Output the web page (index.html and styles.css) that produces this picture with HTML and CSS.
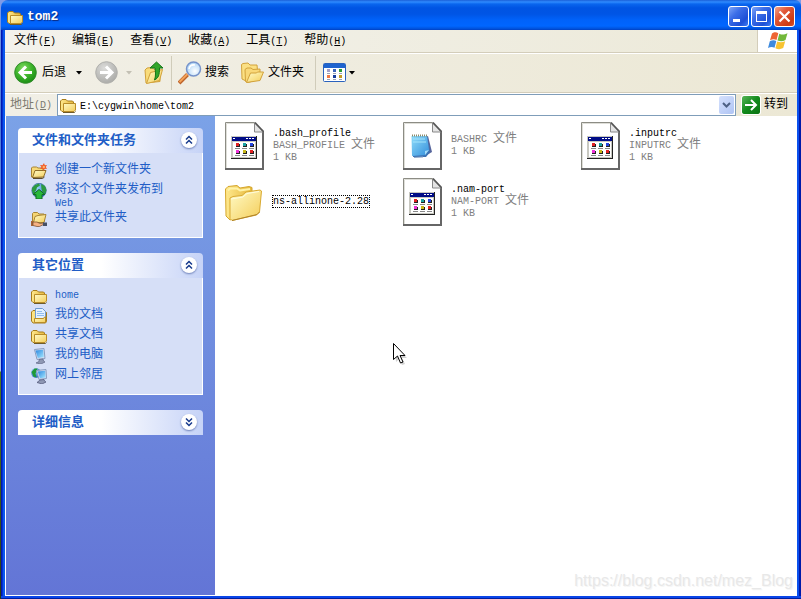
FILE: index.html
```html
<!DOCTYPE html>
<html lang="zh-CN">
<head>
<meta charset="utf-8">
<meta name="viewport" content="width=device-width, initial-scale=1">
<title>tom2</title>
<link rel="stylesheet" href="styles.css">
</head>
<body>
<svg class="defs" aria-hidden="true">
  <defs>
    <linearGradient id="gFolder" x1="0" y1="0" x2="1" y2="1"><stop offset="0" stop-color="#fffbc8"/><stop offset="1" stop-color="#f4cd58"/></linearGradient>
    <linearGradient id="gBack" x1="0" y1="0" x2="1" y2="0"><stop offset="0" stop-color="#ffe98e"/><stop offset="1" stop-color="#e6b83c"/></linearGradient>
    <radialGradient id="gGreen" cx=".4" cy=".3" r=".75"><stop offset="0" stop-color="#7ed860"/><stop offset=".5" stop-color="#3fb52c"/><stop offset="1" stop-color="#178a12"/></radialGradient>
    <radialGradient id="gGrey" cx=".4" cy=".3" r=".75"><stop offset="0" stop-color="#dcdcda"/><stop offset="1" stop-color="#a9a9a6"/></radialGradient>
    <radialGradient id="gLens" cx=".6" cy=".65" r=".7"><stop offset="0" stop-color="#ffffff"/><stop offset="1" stop-color="#a5d0f6"/></radialGradient>
    <linearGradient id="gScreen" x1="0" y1="0" x2="1" y2="1"><stop offset="0" stop-color="#2a86e0"/><stop offset="1" stop-color="#a6e8ff"/></linearGradient>
    <linearGradient id="gPad" x1="0" y1="0" x2="1" y2="1"><stop offset="0" stop-color="#8fdcfa"/><stop offset="1" stop-color="#3590dc"/></linearGradient>
    <linearGradient id="gGo" x1="0" y1="0" x2="1" y2="1"><stop offset="0" stop-color="#58b558"/><stop offset=".5" stop-color="#128a1c"/><stop offset="1" stop-color="#0c7414"/></linearGradient>
    <radialGradient id="gGlobe" cx=".35" cy=".3" r=".8"><stop offset="0" stop-color="#9fd8ff"/><stop offset="1" stop-color="#1559b8"/></radialGradient>
  </defs>
  <symbol id="folder16" viewBox="0 0 16 16">
    <path d="M.5 13V4L2 2.500h4L7.500 4h5l1 1v8.500l-1 1H2z" fill="url(#gBack)" stroke="#a67d1c"/>
    <path d="M3.500 14.500v-8h12V13L14 14.500z" fill="url(#gFolder)" stroke="#b98d28"/>
    <path d="M3 15.500h11.500l1-1" fill="none" stroke="#6d5a2a"/>
  </symbol>
  <symbol id="newfolder" viewBox="0 0 16 16">
    <path d="M.5 14V5l1-1h4l1.500 1H12v9z" fill="#f7d978" stroke="#a88434"/>
    <path d="M1.500 14.500L4 7.500h11l-2.500 6.500z" fill="url(#gFolder)" stroke="#8f6d26"/>
    <path d="M2 15.500h9.500l2-1.500" fill="none" stroke="#594a2c"/>
    <path d="M13 0l.8 2.300L16 2l-1.200 2L16 6l-2.200-.3L12.500 8l-.8-2.300L9 6l1.500-2L9 2l2.500.2z" fill="#f15a24"/><circle cx="12.800" cy="4" r="1.200" fill="#ffb26a"/>
  </symbol>
  <symbol id="publish" viewBox="0 0 16 16">
    <circle cx="8" cy="7.500" r="7.200" fill="url(#gGlobe)" stroke="#21568c" stroke-width=".6"/>
    <path d="M1 5l3-3 4-1.500 1 2-3 2-1 3-2 2-2-1zM10 1l4 2 1.500 4-1 4-3-2-1-3zM1 9l3 0 2 3-1 2z" fill="#2c9a40"/>
    <path d="M8 6.500l6 5h-3V16H5v-4.500H2z" fill="#28b83a" stroke="#116c22"/>
  </symbol>
  <symbol id="share" viewBox="0 0 16 16">
    <path d="M1.500 11V2.500l1-1h4L8 3h5v8z" fill="#f5d573" stroke="#a88434"/>
    <path d="M2.500 11.500L4 5.500l3-1 8-1-2 8z" fill="url(#gFolder)" stroke="#a88434"/>
    <path d="M0 10h2v5H0z" fill="#a86438"/><path d="M2 11l4 0 3 1.500 4-.5.5 1-5 2.500H6l-4-1z" fill="#f6b182" stroke="#704628" stroke-width=".7"/>
    <path d="M12 11.500h4V15h-4z" fill="#465066"/>
  </symbol>
  <symbol id="docs" viewBox="0 0 16 16">
    <path d="M.5 13V4L2 2.500h3l1 1h8.500l1 1v9l-1 1.500H2z" fill="url(#gBack)" stroke="#a67d1c"/>
    <path d="M4.500 11V.5h7l3 3V11z" fill="#e4f1ff" stroke="#6e9ad0"/><path d="M6 3.500h5M6 5.500h7M6 7.500h7" stroke="#8fbcf0"/>
    <path d="M3.500 14.500V10.500h9l1-1.500h1v5.500z" fill="url(#gFolder)" stroke="#b98d28"/>
  </symbol>
  <symbol id="computer" viewBox="0 0 16 16">
    <path d="M3.500 1.500L13 .5l1 10-8 1z" fill="#cfdcf3" stroke="#8a9dbf"/>
    <path d="M4.500 2.500L12 1.800l.8 7.200-6 1z" fill="url(#gScreen)"/>
    <path d="M8 11.500l4-.5.5 2 1.500 1-4 2-5-1 3-1.500z" fill="#8f98b4" stroke="#5d6484" stroke-width=".7"/>
  </symbol>
  <symbol id="network" viewBox="0 0 16 16">
    <circle cx="5" cy="5" r="4.800" fill="url(#gGlobe)"/><path d="M.5 4l3-3.500 3 0-1 3-1 2 1 4-3-1z" fill="#1f9a38"/>
    <path d="M5.500 2.500l9.500-1 .5 9-7.500 1z" fill="#cfdcf3" stroke="#8a9dbf"/><path d="M6.800 3.500l7.400-.8.300 6.800-5.500.8z" fill="url(#gScreen)"/>
    <path d="M9 12l4-.5.5 1.500 1.500 1-4 2-5-1.500z" fill="#8f98b4" stroke="#4c5274" stroke-width=".7"/>
  </symbol>
  <symbol id="caret" viewBox="0 0 6 4"><path d="M0 0h6L3 3.500z" fill="currentColor"/></symbol>
  <symbol id="chevrons" viewBox="0 0 16 16"><path d="M5 7.500l3-3 3 3M5 11.500l3-3 3 3" fill="none" stroke="#173a8c" stroke-width="1.500"/></symbol>
  <symbol id="document" viewBox="0 0 40 48">
    <path d="M.5.500H29.500L38.500 9.500v38H.5z" fill="#fff" stroke="#8c8c84"/>
    <path d="M1.500 46V1.500H29" fill="none" stroke="#deded8"/>
    <path d="M38 9v38" stroke="#666" stroke-width="2"/><path d="M0 47h39" stroke="#666" stroke-width="2"/>
    <path d="M29.500 1v9H38z" fill="#e4e4e4" stroke="#888"/><path d="M30 .5l8.500 9" stroke="#555" stroke-width="1.500"/>
  </symbol>
  <symbol id="appfile" viewBox="0 0 40 48">
    <use href="#document"/>
    <path d="M6 14h26v23H6z" fill="#222"/><path d="M6 14h25v22H6z" fill="#c8c8c0"/><path d="M8 20h22v15H8z" fill="#fff"/>
    <path d="M7 15h24v4H7z" fill="#000c86"/><path d="M8 16h2v1H8zM21 16h2v1h-2zM24 16h2v1h-2zM27 16h2v1h-2z" fill="#fff"/>
    <path d="M11 22h4v3h-4zM18 22h4v3h-4zM25 22h4v3h-4zM11 29h4v3h-4zM18 29h4v3h-4zM25 29h4v3h-4z" fill="#222"/>
    <path d="M11 21h3v3h-3zM25 28h3v3h-3z" fill="#e22222"/><path d="M18 21h3v3h-3z" fill="#18a0a0"/><path d="M25 21h3v3h-3z" fill="#2445e0"/><path d="M11 28h3v3h-3z" fill="#ee30d8"/><path d="M18 28h3v3h-3z" fill="#c7b818"/>
    <path d="M10 26.500h5M17 26.500h5M24 26.500h5M10 33.500h5M17 33.500h5M24 33.500h5" stroke="#888"/>
  </symbol>
  <symbol id="notefile" viewBox="0 0 40 48">
    <use href="#document"/>
    <path d="M22 15l3-1 4 16-5 3z" fill="#56659c"/>
    <path d="M9 14h15l3 16-4 5H10z" fill="#3d74b4"/>
    <path d="M8.500 14h15.500l2 14-4 5-13 1z" fill="url(#gPad)"/><path d="M9 13.500h15" stroke="#8a8a6a" stroke-width="2" stroke-dasharray="1 1"/>
    <path d="M10 17h12M10 20h13" stroke="#a4e4fb"/><path d="M22 33v-4l4-1z" fill="#a4dcf8"/>
    <path d="M11 35.500l9-.5" stroke="#8aa4c8"/>
  </symbol>
  <symbol id="bigfolder" viewBox="0 0 40 48">
    <path d="M.5 11L3 8.500l9-1L15 10l9-1.500 3 1v24L5 42l-4-4z" fill="url(#gBack)" stroke="#d5a62c"/>
    <path d="M3 12.500l2-2h7l3 2 10-1.500" fill="none" stroke="#fff3a8" stroke-width="2"/>
    <path d="M5 20l3-1.500 9-1 4-3.500 14-2 1.500 1-2 21-3 3L7 42.500l-2-2z" fill="url(#gFolder)" stroke="#d9aa32"/>
    <path d="M6 21l12-2 4-3.500 12-2" fill="none" stroke="#fffde0"/><path d="M7 42.500l25-6 2.500-2.500" fill="none" stroke="#af8229"/>
  </symbol>
</svg>

<div class="window">
  <header class="titlebar">
    <svg class="i16"><use href="#folder16"/></svg>
    <h1>tom2</h1>
    <button class="winbtn" type="button" aria-label="最小化"><svg viewBox="0 0 19 19"><path d="M4 12h7v3H4z" fill="#fff"/></svg></button>
    <button class="winbtn" type="button" aria-label="最大化"><svg viewBox="0 0 19 19"><path d="M4 4h11v11H4zM5 7v7h9V7z" fill="#fff" fill-rule="evenodd"/></svg></button>
    <button class="winbtn close" type="button" aria-label="关闭"><svg viewBox="0 0 19 19"><path d="M4.500 4.500l10 10M14.500 4.500l-10 10" stroke="#fff" stroke-width="2.200"/></svg></button>
  </header>

  <div class="frame">
    <nav class="menubar">
      <button type="button">文件<span class="en">(<u>F</u>)</span></button>
      <button type="button">编辑<span class="en">(<u>E</u>)</span></button>
      <button type="button">查看<span class="en">(<u>V</u>)</span></button>
      <button type="button">收藏<span class="en">(<u>A</u>)</span></button>
      <button type="button">工具<span class="en">(<u>T</u>)</span></button>
      <button type="button">帮助<span class="en">(<u>H</u>)</span></button>
      <div class="flag">
        <svg viewBox="0 0 20 18"><path d="M4 1.500C6.500-.3 8.500.2 10.300 1.200L8.500 8C6.500 7 4.500 7 2 8.300z" fill="#ee6433"/><path d="M11.300 1.700c2.700 1.300 5 1 8.200-.4L17.500 8c-3 1.500-5 1.500-8 .4z" fill="#72b83a"/><path d="M1.800 9.300C4.300 8 6.300 8 8.300 9L6.500 15.800C4.500 14.800 2.500 14.800 0 16z" fill="#3e8ade"/><path d="M9.200 9.500c2.800 1.200 5 1 8-.3l-2 6.800c-3 1.500-5 1.500-7.800.2z" fill="#f8c331"/></svg>
      </div>
    </nav>

    <div class="toolbar">
      <button class="tool back" type="button">
        <svg class="i24" viewBox="0 0 24 24"><circle cx="11.500" cy="11.500" r="10.800" fill="url(#gGreen)" stroke="#328c2b"/><path d="M12 5.500l-6 6 6 6M6.500 11.500H18" fill="none" stroke="#fff" stroke-width="3"/></svg>
        <span>后退</span><svg class="caret"><use href="#caret"/></svg>
      </button>
      <button class="tool forward" type="button" aria-label="前进" disabled>
        <svg class="i24" viewBox="0 0 24 24"><circle cx="11.500" cy="11.500" r="10.800" fill="url(#gGrey)" stroke="#b1b1ad"/><path d="M11 5.500l6 6-6 6M16.500 11.500H5" fill="none" stroke="#fff" stroke-width="3"/></svg>
        <svg class="caret"><use href="#caret"/></svg>
      </button>
      <button class="tool up" type="button" aria-label="向上">
        <svg class="i24" viewBox="0 0 24 24"><path d="M2 22L1 9l2-2 5-.5 2 2h6v12z" fill="#f9dc7b" stroke="#d2a23b"/><path d="M2.500 22.500l4-11 12-3-3 11z" fill="url(#gFolder)" stroke="#d2a23b"/><path d="M12.500 1l6.500 6h-3.500c0 7-1 10-5 12 1.500-4 1-8 .5-12H6z" fill="#31a62a" stroke="#167518"/></svg>
      </button>
      <span class="sep"></span>
      <button class="tool" type="button">
        <svg class="i24" viewBox="0 0 24 24"><path d="M1 22l8.500-8.500" stroke="#bd6229" stroke-width="4"/><path d="M1.500 21l8-8" stroke="#f3a259" stroke-width="2"/><circle cx="15.500" cy="8" r="7" fill="url(#gLens)" stroke="#7793ca" stroke-width="1.500"/><path d="M11 8c.5-3 3-4.500 6-4" fill="none" stroke="#fff" stroke-width="1.500"/></svg>
        <span>搜索</span>
      </button>
      <button class="tool folders" type="button">
        <svg class="i24" viewBox="0 0 24 24"><path d="M.5 3.500l1.500-1 5-.5 2 2h7l1 11-12 5-4-2z" fill="#fbe084" stroke="#d2a23b"/><path d="M4.500 20.500L4 8.500l2-1.500 4 0 2 1.500 7-.5v10L7 21.500z" fill="#f9d878" stroke="#d2a23b"/><path d="M5.500 21.500l4-9.500h6l1-1h6l-3.500 8.500z" fill="url(#gFolder)" stroke="#d2a23b"/></svg>
        <span>文件夹</span>
      </button>
      <span class="sep wide"></span>
      <button class="tool views" type="button" aria-label="查看方式">
        <svg class="i24" viewBox="0 0 24 24"><rect x=".5" y="2.500" width="22" height="18" rx="1" fill="#fff" stroke="#2a62bd"/><path d="M1 3h21v4H1z" fill="#1f64cf"/><path d="M4 8h3v3H4z" fill="#a5a0c8"/><path d="M10 8h3v3h-3z" fill="#3c65ba"/><path d="M16 8h3v3h-3z" fill="#2d9b36"/><path d="M4 14h3v3H4z" fill="#f17945"/><path d="M10 14h3v3h-3z" fill="#173d9c"/><path d="M16 14h3v3h-3z" fill="#c69a25"/><path d="M4 12.500h3M10 12.500h3M16 12.500h3M4 18.500h3M10 18.500h3M16 18.500h3" stroke="#9aa2b4"/></svg>
        <svg class="caret"><use href="#caret"/></svg>
      </button>
    </div>

    <form class="address">
      <label for="addr">地址<span class="en">(<u>D</u>)</span></label>
      <div class="combo">
        <svg class="i16"><use href="#folder16"/></svg>
        <input id="addr" type="text" value="E:\cygwin\home\tom2">
        <button class="drop" type="button" aria-label="展开"><svg viewBox="0 0 9 6"><path d="M1 1l3.500 3.500L8 1" fill="none" stroke="#4d6185" stroke-width="2"/></svg></button>
      </div>
      <button class="go" type="button"><svg viewBox="0 0 18 18"><rect width="18" height="18" rx="1.500" fill="url(#gGo)"/><path d="M3 9h11M9 4l5 5-5 5" fill="none" stroke="#fff" stroke-width="2"/></svg><span>转到</span></button>
    </form>

    <div class="body">
      <aside class="sidebar">
        <section class="panel">
          <h2>文件和文件夹任务<button type="button" aria-label="收起"><svg><use href="#chevrons"/></svg></button></h2>
          <ul>
            <li><a href="#"><svg class="i16"><use href="#newfolder"/></svg><span>创建一个新文件夹</span></a></li>
            <li><a href="#"><svg class="i16"><use href="#publish"/></svg><span>将这个文件夹发布到<br><small>Web</small></span></a></li>
            <li><a href="#"><svg class="i16"><use href="#share"/></svg><span>共享此文件夹</span></a></li>
          </ul>
        </section>
        <section class="panel">
          <h2>其它位置<button type="button" aria-label="收起"><svg><use href="#chevrons"/></svg></button></h2>
          <ul>
            <li><a href="#"><svg class="i16"><use href="#folder16"/></svg><span><small>home</small></span></a></li>
            <li><a href="#"><svg class="i16"><use href="#docs"/></svg><span>我的文档</span></a></li>
            <li><a href="#"><svg class="i16"><use href="#folder16"/></svg><span>共享文档</span></a></li>
            <li><a href="#"><svg class="i16"><use href="#computer"/></svg><span>我的电脑</span></a></li>
            <li><a href="#"><svg class="i16"><use href="#network"/></svg><span>网上邻居</span></a></li>
          </ul>
        </section>
        <section class="panel closed">
          <h2>详细信息<button type="button" aria-label="展开"><svg><use href="#chevrons"/></svg></button></h2>
        </section>
      </aside>

      <main class="files">
        <div class="file"><svg><use href="#appfile"/></svg><p><b>.bash_profile</b><br>BASH_PROFILE <span class="zh">文件</span><br>1 KB</p></div>
        <div class="file"><svg><use href="#notefile"/></svg><p>BASHRC <span class="zh">文件</span><br>1 KB</p></div>
        <div class="file"><svg><use href="#appfile"/></svg><p><b>.inputrc</b><br>INPUTRC <span class="zh">文件</span><br>1 KB</p></div>
        <div class="file"><svg><use href="#bigfolder"/></svg><p><b class="focus">ns-allinone-2.28</b></p></div>
        <div class="file"><svg><use href="#appfile"/></svg><p><b>.nam-port</b><br>NAM-PORT <span class="zh">文件</span><br>1 KB</p></div>
      </main>
    </div>
  </div>
</div>
<svg class="cursor" viewBox="0 0 16 22"><path d="M2 3l12 12H9l3 6-3 1-3-6-3 3z" fill="#000" opacity=".18"/><path d="M.5.500v16l4-3.500 3 7 2.500-1-3-6.500h5z" fill="#fff" stroke="#000"/></svg>
<p class="watermark">https://blog.csdn.net/mez_Blog</p>
</body>
</html>
```
FILE: styles.css
```css
* { box-sizing: border-box; }
html, body { height: 100%; }
body {
  margin: 0;
  font: 12px/13px "Liberation Mono", "Noto Sans CJK SC", monospace;
  color: #000;
  background: linear-gradient(#7f9be8 0, #4a78dc 120px, #a9c4ee 371px, #4f7a1e 372px, #2c3a12 100%);
}
h1, h2, p, ul { margin: 0; padding: 0; }
ul { list-style: none; }
svg { display: block; flex: none; }
button { margin: 0; padding: 0; border: 0; background: none; font: inherit; color: inherit; }
.defs { position: absolute; width: 0; height: 0; }
.en, small { font-size: 10px; }
.zh { font-size: 12px; }
.i16 { width: 16px; height: 16px; }
.i24 { width: 24px; height: 24px; }
.caret { width: 6px; height: 4px; }

.window { min-height: 100%; display: flex; flex-direction: column; margin-left: 1px; }

.titlebar {
  display: flex; align-items: center; height: 30px; padding: 3px 6px 0 6px;
  border-radius: 7px 6px 0 0;
  background: linear-gradient(#1b60d8 0, #2f8bff 2px, #0a66ee 4px, #0054e3 8px, #0055e5 14px, #0062fa 20px, #0066ff 26px, #0050d8 29px, #003dc0 30px);
}
.titlebar h1 {
  flex: 1; margin-left: 4px; color: #fff;
  font: bold 13px/16px "Liberation Mono", "Noto Sans CJK SC", monospace;
  text-shadow: 1px 1px 1px #0a2a80;
}
.winbtn {
  width: 21px; height: 21px; margin-left: 2px; border: 1px solid #fff; border-radius: 3px;
  background: linear-gradient(135deg, #7ea5f8 0, #3c6ee8 35%, #1d4fd6 75%, #3c7cf4 100%);
}
.winbtn svg { width: 19px; height: 19px; }
.winbtn.close { background: linear-gradient(135deg, #f2a48c 0, #e2593a 35%, #cc3a12 80%, #d8542c 100%); }

.frame {
  flex: 1; display: flex; flex-direction: column; padding: 0 4px 3px 4px;
  background:
    linear-gradient(#0a45e8 0 2px, #001ea0 2px) left bottom / 100% 3px no-repeat,
    linear-gradient(to right, #0019b0 0 1px, #0530cf 1px 2px, #0a58ee 2px 4px) left top / 4px 100% no-repeat,
    linear-gradient(to right, #0a50ee 0 2px, #0019a8 2px 4px) right top / 4px 100% no-repeat;
}

.menubar {
  display: flex; gap: 16px; height: 23px; padding-left: 9px;
  border-bottom: 1px solid #d3cdba;
  background: linear-gradient(to right, #f3f2ec, #ece9d8);
}
.menubar button { height: 22px; white-space: nowrap; }
.flag {
  display: flex; align-items: center; justify-content: center; width: 40px; margin-left: auto;
  border-left: 1px solid #d3cdba; background: #fff;
}
.flag svg { width: 20px; height: 18px; }

.toolbar {
  display: flex; align-items: center; height: 40px; padding-left: 9px;
  border-top: 1px solid #fff; border-bottom: 1px solid #d3cdba;
  background: linear-gradient(to right, #f1efe6, #ece8d5);
}
.tool { display: flex; align-items: center; gap: 3px; height: 38px; white-space: nowrap; }
.tool .caret { color: #000; }
.back { gap: 4px; }
.back .caret { margin-left: 6px; }
.forward { gap: 7px; margin-left: 13px; }
.forward .caret { color: #c3c0b4; }
.up { margin-left: 12px; }
.folders { margin-left: 12px; }
.views { gap: 2px; }
.sep { width: 1px; height: 34px; margin: 0 6px 0 3px; background: #d0ccba; }
.sep.wide { margin: 0 7px 0 11px; }

.address {
  display: flex; align-items: center; height: 23px; padding-left: 5px;
  border-top: 1px solid #fff; background: linear-gradient(to right, #f1efe6, #ece8d5);
}
.address label { color: #7c7a70; white-space: nowrap; }
.combo {
  flex: 1; display: flex; align-items: center; min-width: 0; height: 22px; margin-left: 5px; padding: 0 1px 0 2px;
  border: 1px solid #7f9db9; background: #fff;
}
.combo input {
  flex: 1; min-width: 0; height: 20px; margin: 0; padding: 2px 0 0 4px; border: 0; outline: 0; background: none;
  color: #000; font: 10px/18px "Liberation Mono", "Noto Sans CJK SC", monospace;
}
.drop {
  display: flex; align-items: center; justify-content: center; width: 15px; height: 18px;
  border-radius: 2px; background: linear-gradient(135deg, #d5e1fd, #afc4f4);
}
.drop svg { width: 9px; height: 6px; }
.go { display: flex; align-items: center; gap: 4px; margin: 0 9px 0 6px; white-space: nowrap; }
.go svg { width: 18px; height: 18px; border-radius: 2px; box-shadow: 0 0 0 1px #fff; }

.body { flex: 1; display: flex; border: solid #fff; border-width: 0 0 1px 1px; background: #fff; }
.sidebar {
  flex: none; width: 209px; padding: 12px;
  background: linear-gradient(#7ba2e7, #6375d6);
}
.panel + .panel { margin-top: 15px; }
.panel h2 {
  display: flex; align-items: center; justify-content: space-between; height: 25px; padding: 0 6px 0 14px;
  border-radius: 4px 4px 0 0; color: #215dc6; font-size: 13px; line-height: 16px; font-weight: bold;
  background: linear-gradient(to right, #fff 45%, #c6d3f7);
}
.panel h2 button { width: 16px; height: 16px; margin-bottom: 2px; border-radius: 50%; background: #fff; box-shadow: 0 1px 2px #6d80b8; }
.panel h2 svg { width: 16px; height: 16px; }
.panel.closed h2 svg { transform: rotate(180deg); }
.panel ul { padding: 9px 12px 7px 12px; border: 1px solid #fff; border-top: 0; background: #d6dff7; }
.panel a { display: flex; gap: 8px; min-height: 20px; color: #215dc6; text-decoration: none; white-space: nowrap; }
.panel a > span { padding-top: 2px; }
.panel a .i16 { margin-top: 1px; }

.files {
  flex: 1; display: grid; grid-template-columns: repeat(auto-fill, 178px); grid-auto-rows: 48px; row-gap: 8px;
  align-content: start; padding: 6px 0 0 10px; background: #fff;
}
.file { display: flex; align-items: center; gap: 8px; }
.file svg { width: 40px; height: 48px; }
.file p { font-size: 10px; line-height: 12px; color: #808080; white-space: nowrap; }
.file .zh { line-height: 10px; }
.file b { color: #000; font-weight: normal; }
.file .focus { outline: 1px dotted #000; }

.cursor { position: absolute; left: 393px; top: 343px; width: 16px; height: 22px; }
.watermark {
  position: absolute; right: 8px; bottom: 9px;
  font: 16px/18px "Liberation Sans", sans-serif; color: #e8e8e8; text-shadow: 1px 1px 0 #f6f6f6;
}
```
